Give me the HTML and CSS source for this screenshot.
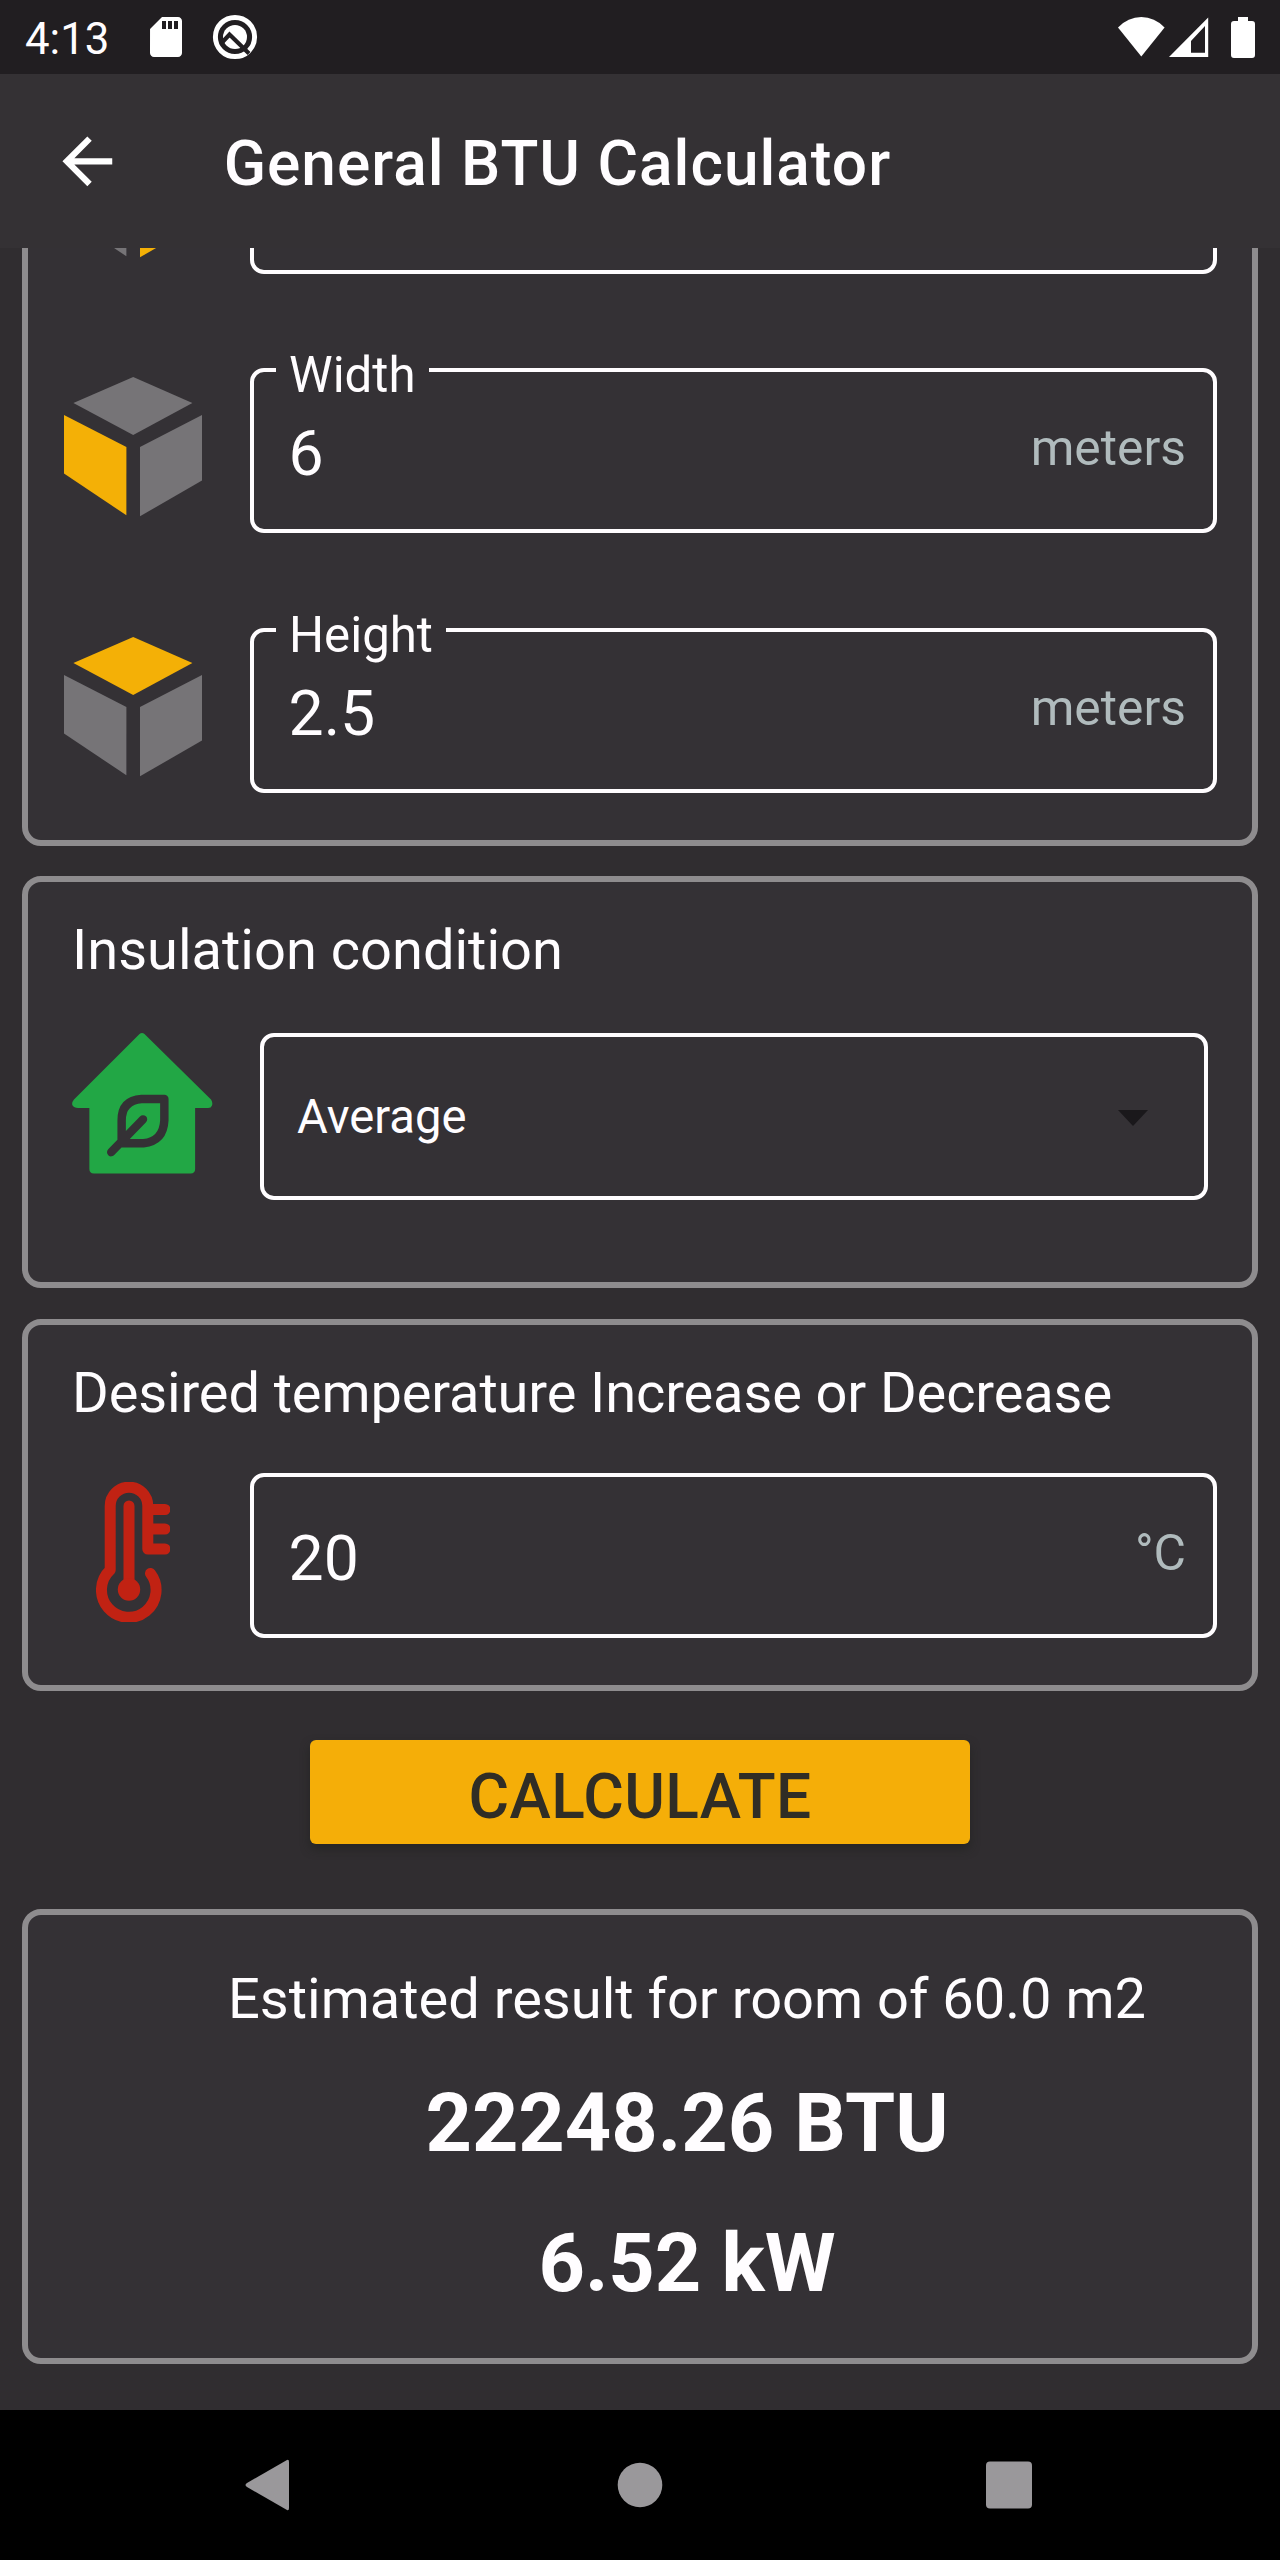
FILE: index.html
```html
<!DOCTYPE html>
<html lang="en">
<head>
<meta charset="utf-8">
<title>General BTU Calculator</title>
<link rel="stylesheet" href="styles.css">
</head>
<body>
<div class="screen">
  <header class="status-bar">
    <span class="clock">4:13</span>
    <svg class="sd-icon" viewBox="0 0 24 24"><path d="M18 2h-8L4.02 8 4 20c0 1.1.9 2 2 2h12c1.1 0 2-.9 2-2V4c0-1.1-.9-2-2-2zm-6 6h-2V4h2v4zm3 0h-2V4h2v4zm3 0h-2V4h2v4z"/></svg>
    <svg class="q-icon" viewBox="0 0 46 46"><circle cx="23" cy="23" r="19.6" fill="none" stroke="#fff" stroke-width="5"/><circle cx="23" cy="23" r="12" fill="#fff"/><path d="M10.500 28l7-7.500L37 39.500" fill="none" stroke="#211e21" stroke-width="4.200"/></svg>
    <span class="spacer"></span>
    <svg class="signal-icons" viewBox="0 0 138 42"><path d="M0 11.5Q10 1 23.300 1T46.600 11.500L23.300 40.500Z"/><path fill-rule="evenodd" d="M90.200 1.500V41H51ZM87 10L73 25V36.700H87Z"/><path d="M120 1h10v4h4q3 0 3 3v31q0 3-3 3h-18q-3 0-3-3V8q0-3 3-3h4z"/></svg>
  </header>
  <div class="app-bar">
    <svg class="back-icon" viewBox="0 0 24 24"><path d="M20 11H7.830l5.590-5.590L12 4l-8 8 8 8 1.410-1.410L7.830 13H20v-2z"/></svg>
    <h1 class="title">General BTU Calculator</h1>
  </div>
  <main class="content">
    <section class="card dimensions">
      <div class="row">
        <svg class="cube" viewBox="0 0 138 140"><path d="M69.200 0L128.400 26 69.200 58 9.400 26Z"/><path d="M0 38L62.400 70V138.300L0 96.400Z"/><path class="lit" d="M138 38L76 70V139.300L138 103.500Z"/></svg>
        <div class="field"></div>
      </div>
      <div class="row">
        <svg class="cube" viewBox="0 0 138 140"><path d="M69.200 0L128.400 26 69.200 58 9.400 26Z"/><path class="lit" d="M0 38L62.400 70V138.300L0 96.400Z"/><path d="M138 38L76 70V139.300L138 103.500Z"/></svg>
        <div class="field"><label class="label">Width</label><span class="value">6</span><span class="unit">meters</span></div>
      </div>
      <div class="row">
        <svg class="cube" viewBox="0 0 138 140"><path class="lit" d="M69.200 0L128.400 26 69.200 58 9.400 26Z"/><path d="M0 38L62.400 70V138.300L0 96.400Z"/><path d="M138 38L76 70V139.300L138 103.500Z"/></svg>
        <div class="field"><label class="label">Height</label><span class="value">2.5</span><span class="unit">meters</span></div>
      </div>
    </section>
    <section class="card insulation">
      <h2 class="heading">Insulation condition</h2>
      <div class="row">
        <svg class="house" viewBox="0 0 142 142"><path fill="#22a745" d="M68 1Q70.500-1 73 1L140 67Q142 70 141 73T136 75.500H124V137Q124 141.500 119.500 141.500H22Q17.500 141.500 17.500 137V75.500H6Q2 75.500 .6 73T2 67Z"/><path class="leaf" d="M93 66.500H70Q50 68 50 88V111H72Q92 109 93 88ZM71.500 87L39.500 120"/></svg>
        <div class="select"><span class="choice">Average</span><svg class="caret" viewBox="0 0 30 16"><path d="M0 0H30L15 16Z"/></svg></div>
      </div>
    </section>
    <section class="card temperature">
      <h2 class="heading long">Desired temperature Increase or Decrease</h2>
      <div class="row">
        <svg class="thermo" viewBox="0 0 74 140"><path d="M14.200 88V24A18.800 18.800 0 0 1 51.800 24V67M51.800 27.500H69M51.800 47H69M51.800 67H69M14.200 88A27.300 27.300 0 1 0 54.500 91.500M33 24V104"/><circle cx="33" cy="107.500" r="11.200"/></svg>
        <div class="field plain"><span class="value">20</span><span class="unit">°C</span></div>
      </div>
    </section>
    <button class="calculate">CALCULATE</button>
    <section class="card result">
      <p class="summary">Estimated result for room of 60.0 m2</p>
      <p class="figure btu">22248.26 BTU</p>
      <p class="figure">6.52 kW</p>
    </section>
  </main>
  <nav class="nav-bar">
    <svg viewBox="0 0 46 52"><path d="M43 1Q45 0 45 3V49Q45 52 43 51L3 28Q0 26 3 24Z"/></svg>
    <svg class="home" viewBox="0 0 46 52"><circle cx="23" cy="26" r="22.300"/></svg>
    <svg viewBox="0 0 46 52"><rect x="0" y="2.500" width="46" height="47" rx="4"/></svg>
  </nav>
</div>
</body>
</html>
```
FILE: styles.css
```css
* { box-sizing: border-box; margin: 0; padding: 0; }
body { background: #302d30; color: #fffdff; font-family: Roboto, "Liberation Sans", sans-serif; }
svg { display: block; flex: none; }
.screen { width: 1280px; height: 2560px; display: flex; flex-direction: column; overflow: hidden; }

.status-bar { height: 74px; flex: none; display: flex; align-items: center; background: #211e21; padding: 0 24px 0 25px; }
.clock { width: 117px; font-size: 43.8px; line-height: 74px; padding-top: 4px; }
.sd-icon { width: 48px; height: 48px; fill: #fff; }
.q-icon { width: 46px; height: 46px; margin-left: 22px; }
.spacer { flex: 1; }
.signal-icons { width: 138px; height: 42px; fill: #fff; }

.app-bar { height: 174px; flex: none; display: flex; align-items: center; background: #343134; padding-left: 50px; }
.back-icon { width: 74.7px; height: 74.7px; fill: #fff; }
.title { margin-left: 99px; font-size: 62.2px; font-weight: 500; letter-spacing: 1px; line-height: 74px; padding-top: 5px; white-space: nowrap; }

.content { height: 2162px; flex: none; display: flex; flex-direction: column; overflow: hidden; padding: 0 22px; }
.card { flex: none; background: #343135; border: 6px solid #8e8c8e; border-radius: 19px; }
.row { display: flex; align-items: flex-start; }

.dimensions { height: 827px; margin-top: -229px; padding: 83.500px 36px 0; }
.dimensions .row { height: 259.500px; }
.cube { width: 138px; height: 140px; margin-top: 9px; fill: #767477; }
.cube .lit { fill: #f4b006; }
.field { position: relative; flex: 1; display: flex; justify-content: space-between; align-items: flex-start; height: 165px; border: 4px solid #fffdff; border-radius: 14px; margin: 0 -1px 0 48px; padding: 46px 27px 0 34.500px; }
/* Floating label: sits over the top border and masks it */
.label { position: absolute; left: 22px; top: -25px; padding: 0 13px; background: #343135; font-size: 49.200px; line-height: 56px; }
.value { font-size: 62.500px; line-height: 72px; }
.unit { font-size: 49.800px; line-height: 60px; color: #b0bbbd; }

.insulation { height: 412px; margin-top: 30px; padding: 35px 44px 0; }
.heading { font-size: 56px; font-weight: 400; line-height: 66px; white-space: nowrap; }
.long { letter-spacing: -.12px; }
.house { width: 141px; height: 141px; }
.leaf { fill: none; stroke: #343135; stroke-width: 8.500; stroke-linejoin: round; stroke-linecap: round; }
.select { flex: 1; height: 167px; margin-left: 47px; border: 4px solid #fffdff; border-radius: 14px; display: flex; align-items: center; justify-content: space-between; padding: 0 56px 0 33px; }
.insulation .row { margin-top: 50px; }
.choice { font-size: 47.200px; line-height: 56px; padding-top: 1px; }
.caret { width: 30px; height: 16px; fill: #1a181b; margin-top: 3px; }

.temperature { height: 372px; margin-top: 31px; padding: 35px 36px 0 44px; }
.temperature .row { margin-top: 47px; }
.thermo { width: 74px; height: 140px; margin: 9px 0 0 24px; fill: none; stroke: #c12213; stroke-width: 11; stroke-linecap: round; stroke-linejoin: round; }
.thermo circle { fill: #c12213; stroke: none; }
.plain { margin-left: 80px; }

.calculate { flex: none; align-self: center; width: 660px; height: 104px; margin-top: 49px; border: 0; border-radius: 6px; background: #f5ae08; color: #302d25; font: 500 62.2px/104px Roboto, sans-serif; letter-spacing: .4px; padding-top: 5px; box-shadow: 0 5px 10px rgba(30, 32, 28, .6); }

.result { height: 455px; margin-top: 65px; padding: 51px 0 0 94px; text-align: center; }
.summary { font-size: 56px; line-height: 66px; }
.figure { font-size: 81px; font-weight: 700; line-height: 140px; }
.btu { margin-top: 22px; }

.nav-bar { height: 150px; flex: none; background: #000; display: flex; align-items: center; justify-content: space-between; padding: 0 248px 0 244px; fill: #9a989b; }
.nav-bar svg { width: 46px; height: 52px; }
.nav-bar .home { margin-left: 4px; }
```
